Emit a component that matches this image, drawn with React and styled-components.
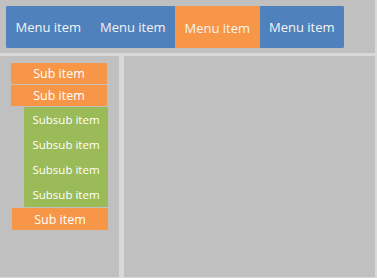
import React from "react";
import styled, { createGlobalStyle } from "styled-components";

const Global = createGlobalStyle`
  html, body { margin: 0; padding: 0; }
  body {
    background: #d9d9d9;
    font-family: "Open Sans", "Liberation Sans", sans-serif;
  }
`;

const menu = [
  { label: "Menu item" },
  { label: "Menu item" },
  { label: "Menu item", active: true },
  { label: "Menu item" },
];

const subs = [
  { label: "Sub item" },
  { label: "Sub item" },
  { label: "Subsub item", level: 2 },
  { label: "Subsub item", level: 2 },
  { label: "Subsub item", level: 2 },
  { label: "Subsub item", level: 2 },
  { label: "Sub item", last: true },
];

export default function App() {
  return (
    <>
      <Global />
      <Page>
        <Header>
          <MenuBar>
            {menu.map((m, i) => (
              <MenuItem key={i} $active={m.active}>{m.label}</MenuItem>
            ))}
          </MenuBar>
        </Header>
        <Body>
          <Sidebar>
            {subs.map((s, i) =>
              s.level === 2 ? (
                <SubSubItem key={i}>{s.label}</SubSubItem>
              ) : (
                <SubItem key={i} $last={s.last}>{s.label}</SubItem>
              )
            )}
          </Sidebar>
          <Content />
        </Body>
      </Page>
    </>
  );
}

const Page = styled.div`
  height: 278px;
  display: grid;
  grid-template-rows: 53px 1fr;
  row-gap: 3px;
  padding: 0 2px 1px 0;
  box-sizing: border-box;
`;

const Header = styled.div`
  background: #c0c0c0;
  padding: 6px 0 0 6px;
`;

const MenuBar = styled.div`
  display: flex;
  width: 338px;
  height: 42px;
  background: #4f81bd;
  border-radius: 2px;
  overflow: hidden;
`;

const MenuItem = styled.div`
  width: 85px;
  display: flex;
  align-items: center;
  justify-content: center;
  background: ${(p) => (p.$active ? "#f79646" : "#4f81bd")};
  color: #f4f4f4;
  font-size: 13px;
  padding-top: ${(p) => (p.$active ? "2px" : "0")};
  box-sizing: border-box;
`;

const Body = styled.div`
  display: grid;
  grid-template-columns: 119px 1fr;
  column-gap: 5px;
`;

const Sidebar = styled.div`
  background: #c0c0c0;
  padding: 7px 0 0 11px;
  display: flex;
  flex-direction: column;
  align-items: flex-start;
`;

const SubItem = styled.div`
  width: 96px;
  height: ${(p) => (p.$last ? "22px" : "21px")};
  margin: ${(p) => (p.$last ? "1px 0 0 1px" : "0 0 1px 0")};
  background: #f79646;
  border-radius: 1px;
  color: #fff;
  font-size: 12.5px;
  display: flex;
  align-items: center;
  justify-content: center;
`;

const SubSubItem = styled.div`
  width: 84px;
  height: 25px;
  margin-left: 13px;
  background: #9bbb59;
  border-radius: 1px;
  color: #fff;
  font-size: 11.5px;
  display: flex;
  align-items: center;
  justify-content: center;
`;

const Content = styled.div`
  background: #c0c0c0;
`;
